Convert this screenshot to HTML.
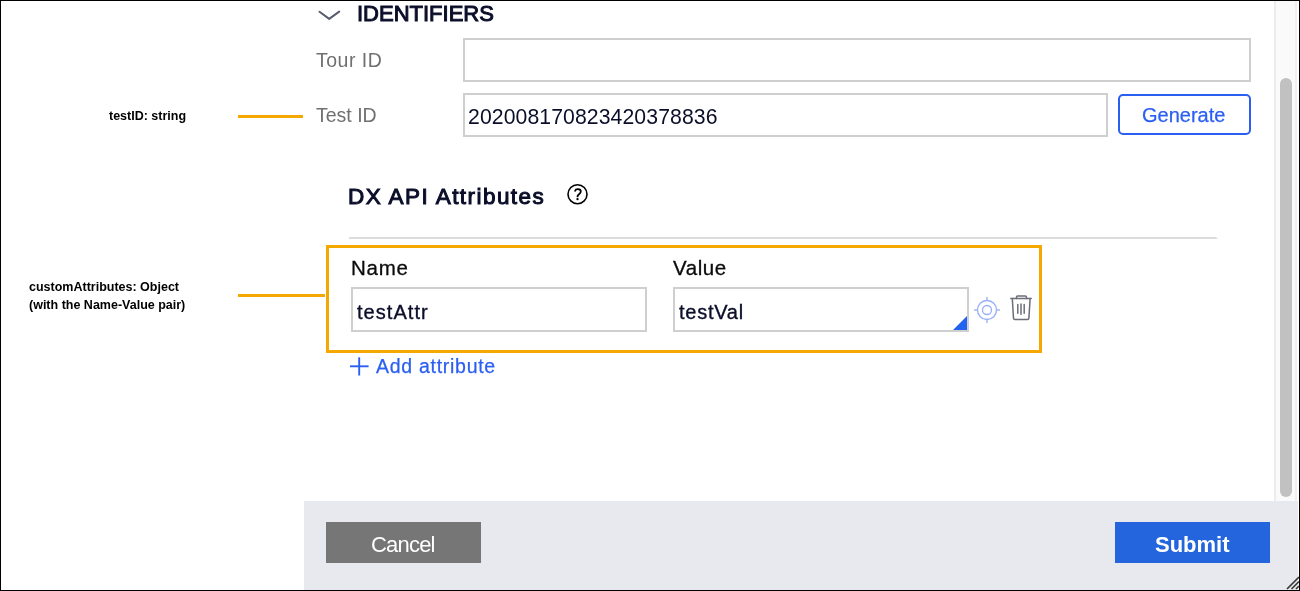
<!DOCTYPE html>
<html>
<head>
<meta charset="utf-8">
<style>
html,body{margin:0;padding:0;}
body{width:1300px;height:591px;position:relative;overflow:hidden;background:#fff;font-family:"Liberation Sans",sans-serif;-webkit-font-smoothing:antialiased;}
.a{will-change:transform;}
.a{position:absolute;white-space:nowrap;line-height:1;}
.frame{position:absolute;left:0;top:0;width:1298px;height:589px;border:1px solid #000;}
.input{position:absolute;box-sizing:border-box;border:2px solid #cfcfcf;background:#fff;}
.orange{position:absolute;background:#f5a800;}
</style>
</head>
<body>

<!-- scrollbar track -->
<div style="position:absolute;left:1274px;top:1px;width:23px;height:500px;background:#fafafa;border-left:2px solid #ececec;box-sizing:border-box;"></div>
<div style="position:absolute;left:1295px;top:1px;width:2px;height:500px;background:#f0f0f0;"></div>
<!-- scrollbar thumb -->
<div style="position:absolute;left:1280px;top:78px;width:12px;height:419px;background:#c1c1c1;border-radius:6px;"></div>

<!-- header chevron -->
<svg class="a" style="left:316px;top:8px;" width="28" height="16" viewBox="0 0 28 16">
  <polyline points="3.5,3.7 13.2,10.9 23.2,3.6" fill="none" stroke="#5a5d6e" stroke-width="2" stroke-linecap="round" stroke-linejoin="round"/>
</svg>
<div class="a" style="left:357px;top:3px;font-size:22px;-webkit-text-stroke:1px #0a0e29;letter-spacing:0px;color:#0a0e29;">IDENTIFIERS</div>

<!-- Tour ID -->
<div class="a" style="left:316px;top:51px;font-size:19.5px;letter-spacing:0.5px;color:#707070;">Tour ID</div>
<div class="input" style="left:463px;top:38px;width:788px;height:44px;"></div>

<!-- Test ID -->
<div class="a" style="left:316px;top:106px;font-size:19.5px;color:#707070;">Test ID</div>
<div class="input" style="left:463px;top:93px;width:645px;height:44px;"></div>
<div class="a" style="left:468px;top:105.5px;font-size:21.2px;letter-spacing:0.1px;color:#0a0e29;">202008170823420378836</div>

<!-- Generate -->
<div style="position:absolute;left:1118px;top:94px;width:133px;height:41px;box-sizing:border-box;border:2px solid #2b5ff2;border-radius:5px;"></div>
<div class="a" style="left:1142px;top:105px;font-size:20px;-webkit-text-stroke:0.25px #2b5ff2;color:#2b5ff2;">Generate</div>

<!-- DX API Attributes -->
<div class="a" style="left:348px;top:186px;font-size:22.5px;-webkit-text-stroke:1px #0a0e29;letter-spacing:1.45px;color:#0a0e29;">DX API Attributes</div>
<svg class="a" style="left:566px;top:183px;" width="23" height="23" viewBox="0 0 23 23">
  <circle cx="11.5" cy="11.2" r="9.5" fill="none" stroke="#000" stroke-width="1.6"/>
  <path d="M9.1 7.9 C9.4 6.7 10.5 6.2 11.9 6.2 C13.6 6.2 14.8 7.2 14.8 8.6 C14.8 10 13.9 10.7 12.8 11.5 C11.9 12.2 11.5 12.6 11.5 13.4" fill="none" stroke="#000" stroke-width="1.8" stroke-linecap="round"/>
  <circle cx="11.5" cy="16.1" r="1.2" fill="#000"/>
</svg>

<!-- divider -->
<svg class="a" style="left:340px;top:230px;" width="890" height="16" viewBox="0 0 890 16"><polygon points="9.5,7 876,7 878,9 8.5,9" fill="#dcdcdc"/></svg>

<!-- orange box -->
<div style="position:absolute;left:326px;top:245px;width:710px;height:102px;border:3px solid #f5a800;"></div>

<div class="a" style="left:351px;top:258.3px;font-size:20.5px;letter-spacing:0.75px;-webkit-text-stroke:0.3px #0b0b0b;color:#0b0b0b;">Name</div>
<div class="a" style="left:673px;top:258.3px;font-size:20.5px;letter-spacing:0.55px;-webkit-text-stroke:0.3px #0b0b0b;color:#0b0b0b;">Value</div>

<div class="input" style="left:351px;top:287px;width:296px;height:45px;"></div>
<div class="a" style="left:357px;top:301.5px;font-size:20px;letter-spacing:1.05px;-webkit-text-stroke:0.35px #0a0e29;color:#0a0e29;">testAttr</div>

<div class="input" style="left:673px;top:287px;width:296px;height:45px;"></div>
<div class="a" style="left:679px;top:301.5px;font-size:20px;letter-spacing:0.75px;-webkit-text-stroke:0.35px #0a0e29;color:#0a0e29;">testVal</div>
<svg class="a" style="left:953px;top:316px;" width="14" height="14" viewBox="0 0 14 14"><polygon points="14,0 14,14 0,14" fill="#2163ee"/></svg>

<!-- target icon -->
<svg class="a" style="left:973px;top:296px;" width="28" height="28" viewBox="0 0 28 28">
  <g fill="none" stroke="#97aef9" stroke-width="1.3">
    <circle cx="14" cy="14" r="9.5"/>
    <circle cx="14" cy="14" r="4.5"/>
    <line x1="14" y1="1" x2="14" y2="4.5"/>
    <line x1="14" y1="23.5" x2="14" y2="27"/>
    <line x1="1" y1="14" x2="4.5" y2="14"/>
    <line x1="23.5" y1="14" x2="27" y2="14"/>
  </g>
</svg>

<!-- trash icon -->
<svg class="a" style="left:1008px;top:293px;" width="26" height="30" viewBox="0 0 26 30">
  <g fill="none" stroke="#6b6e7a" stroke-width="1.5" stroke-linecap="round" stroke-linejoin="round">
    <line x1="2.8" y1="5.5" x2="23.2" y2="5.5"/>
    <path d="M8.5 5.5 V4 Q8.5 2.9 9.6 2.9 H17.4 Q18.5 2.9 18.5 4 V5.5"/>
    <path d="M4.3 5.5 L5.5 25.1 Q5.6 26.4 6.9 26.4 H19.5 Q20.8 26.4 20.9 25.1 L22.1 5.5"/>
    <line x1="9.8" y1="11.6" x2="9.8" y2="20.2"/>
    <line x1="13" y1="11" x2="13" y2="21.2"/>
    <line x1="16.2" y1="11.6" x2="16.2" y2="20.2"/>
  </g>
</svg>

<!-- Add attribute -->
<svg class="a" style="left:349px;top:356px;" width="21" height="21" viewBox="0 0 21 21">
  <g stroke="#2b5ff2" stroke-width="1.9"><line x1="1" y1="10.3" x2="19.6" y2="10.3"/><line x1="10.2" y1="1.3" x2="10.2" y2="19.5"/></g>
</svg>
<div class="a" style="left:376px;top:356.5px;font-size:19.5px;letter-spacing:0.72px;-webkit-text-stroke:0.25px #2b5ff2;color:#2b5ff2;">Add attribute</div>

<!-- footer -->
<div style="position:absolute;left:304px;top:501px;width:994px;height:89px;background:#e8e9ee;"></div>
<div style="position:absolute;left:326px;top:522px;width:155px;height:41px;background:#767676;"></div>
<div class="a" style="left:371px;top:533.5px;font-size:22px;letter-spacing:-0.8px;color:#fff;">Cancel</div>
<div style="position:absolute;left:1115px;top:522px;width:155px;height:41px;background:#2465de;"></div>
<div class="a" style="left:1155px;top:533.5px;font-size:22px;font-weight:bold;letter-spacing:0px;color:#fff;">Submit</div>
<!-- resize grip -->
<svg class="a" style="left:1286px;top:576px;" width="14" height="14" viewBox="0 0 14 14">
  <g stroke="#3a3a3a" stroke-width="1.7"><line x1="13" y1="1" x2="1" y2="13"/><line x1="13" y1="5.5" x2="5.5" y2="13"/><line x1="13" y1="10" x2="10" y2="13"/></g>
</svg>

<!-- annotations -->
<div class="a" style="left:109px;top:110px;font-size:12.5px;font-weight:bold;letter-spacing:0px;color:#000;">testID: string</div>
<div class="orange" style="left:238px;top:115px;width:65px;height:3px;"></div>
<div class="a" style="left:29px;top:277.5px;font-size:12.5px;font-weight:bold;letter-spacing:0px;color:#000;line-height:18px;">customAttributes: Object<br>(with the Name-Value pair)</div>
<div class="orange" style="left:238px;top:294px;width:87px;height:3px;"></div>

<div class="frame"></div>
</body>
</html>
